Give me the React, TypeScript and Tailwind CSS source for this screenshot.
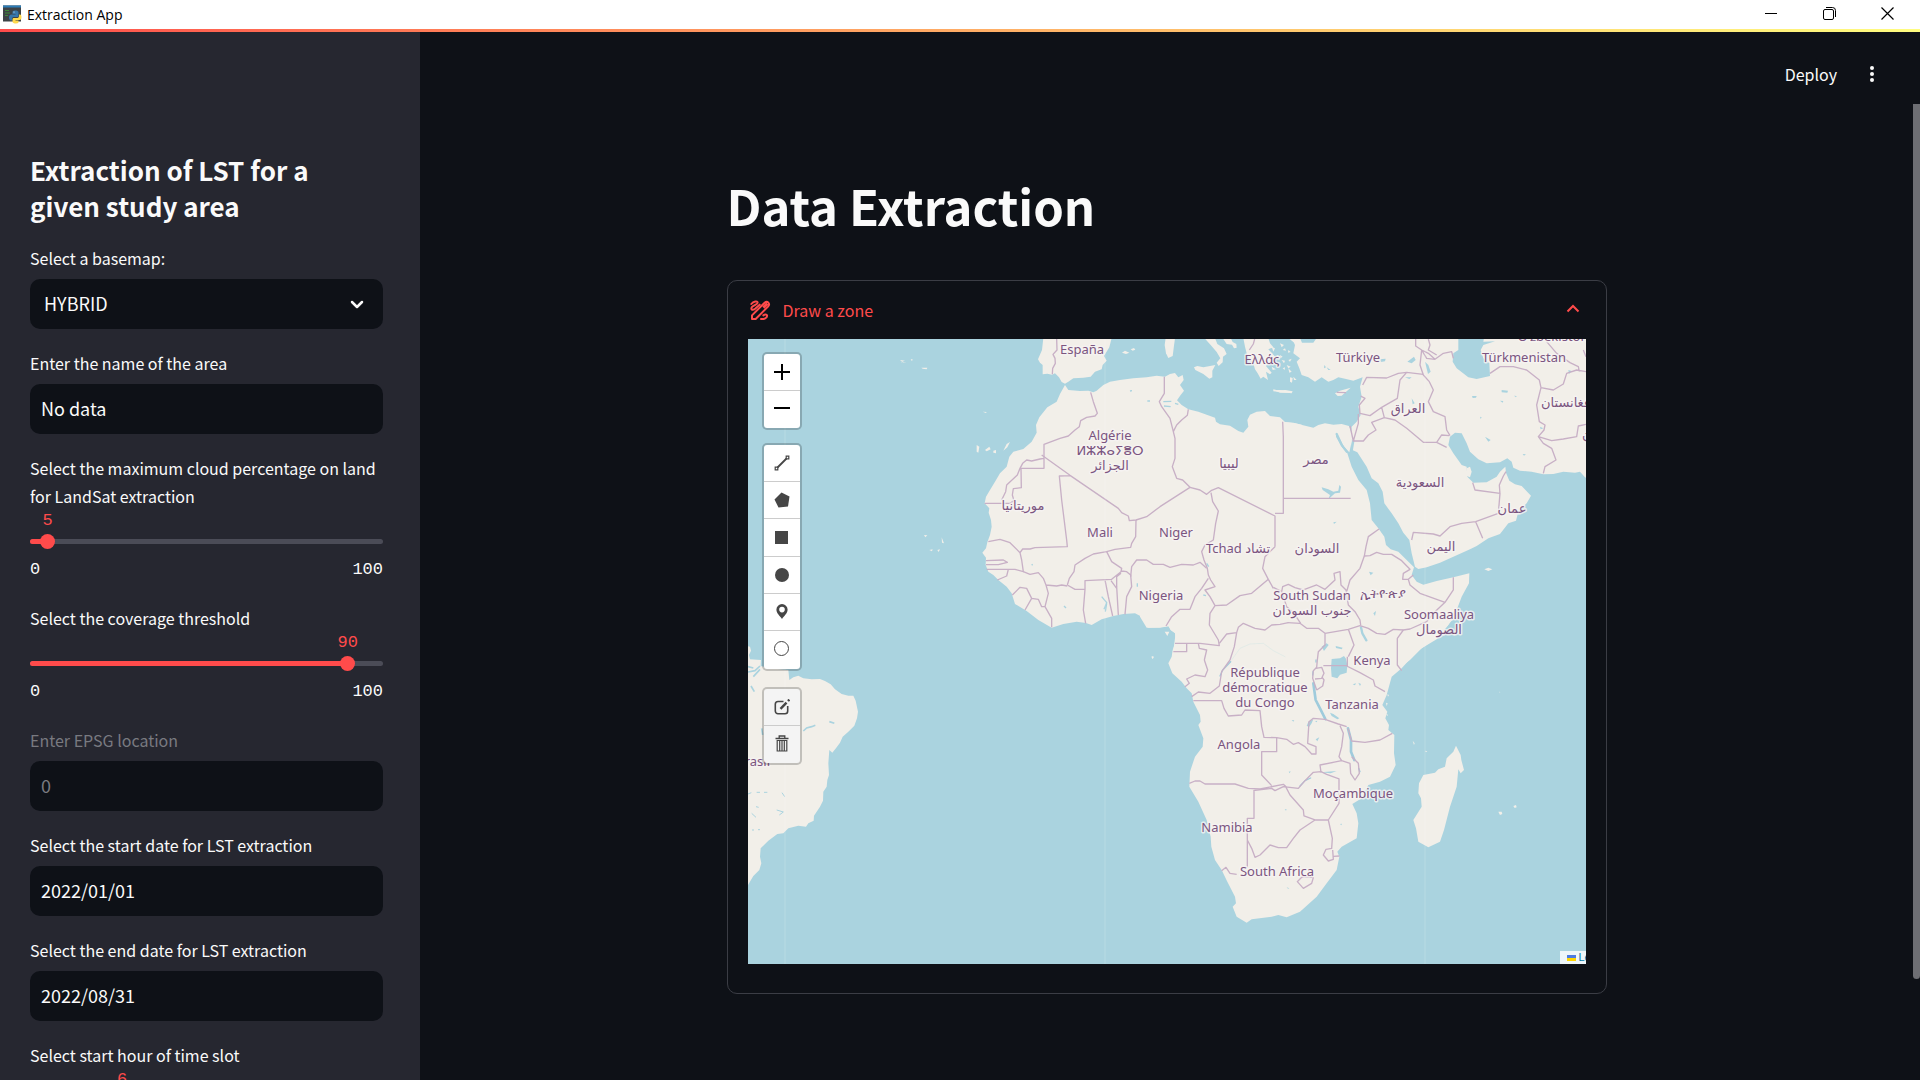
import React, { useState } from "react";

type MapLabel = { x: number; y: number; text: string; anchor?: "start" | "middle" | "end" };

const MAP_LABELS: MapLabel[] = [
  { x: 334, y: 15, text: "España" },
  { x: 514, y: 25, text: "Ελλάς" },
  { x: 610, y: 23, text: "Türkiye" },
  { x: 776, y: 23, text: "Türkmenistan" },
  { x: 805, y: 2, text: "Oʻzbekiston" },
  { x: 362, y: 101, text: "Algérie" },
  { x: 362, y: 116, text: "ⵍⵣⵣⴰⵢⴻⵔ" },
  { x: 362, y: 131, text: "الجزائر" },
  { x: 481, y: 129, text: "ليبيا" },
  { x: 275, y: 171, text: "موريتانيا" },
  { x: 352, y: 198, text: "Mali" },
  { x: 428, y: 198, text: "Niger" },
  { x: 490, y: 214, text: "Tchad تشاد" },
  { x: 413, y: 261, text: "Nigeria" },
  { x: 660, y: 74, text: "العراق" },
  { x: 568, y: 125, text: "مصر" },
  { x: 672, y: 148, text: "السعودية" },
  { x: 764, y: 174, text: "عمان" },
  { x: 693, y: 212, text: "اليمن" },
  { x: 569, y: 214, text: "السودان" },
  { x: 564, y: 261, text: "South Sudan" },
  { x: 564, y: 276, text: "جنوب السودان" },
  { x: 635, y: 259, text: "ኢትዮጵያ" },
  { x: 691, y: 280, text: "Soomaaliya" },
  { x: 691, y: 295, text: "الصومال" },
  { x: 793, y: 68, text: "أفغانستان", anchor: "start" },
  { x: 834, y: 100, text: "پاکستان", anchor: "start" },
  { x: 624, y: 326, text: "Kenya" },
  { x: 517, y: 338, text: "République" },
  { x: 517, y: 353, text: "démocratique" },
  { x: 517, y: 368, text: "du Congo" },
  { x: 604, y: 370, text: "Tanzania" },
  { x: 491, y: 410, text: "Angola" },
  { x: 605, y: 459, text: "Moçambique" },
  { x: 479, y: 493, text: "Namibia" },
  { x: 529, y: 537, text: "South Africa" },
  { x: 22, y: 427, text: "Brasil", anchor: "end" },
];

const LAND = "#f2efe9";
const WATER = "#aad3df";
const BORDER = "#c8b0c6";

const NORTH_WEST = "translate(212 -9) scale(.33333)";
const NORTH_EAST = "translate(522 -49) scale(.33333)";
const SOUTH = "translate(392 241) scale(.33333)";
const AMERICA = "translate(-8 -9) scale(.33333)";

function Land() {
  return (
    <g fill={LAND}>
      <g transform={AMERICA}>
        <path d="M20 948L30 950 33 962 27 975 30 988 63 990 62 1008 90 1015 145 1020 148 1050 160 1042 175 1037 190 1045 215 1048 240 1047 255 1053 272 1063 285 1078 305 1092 325 1097 340 1097 347 1112 354 1145 351 1165 343 1187 325 1205 308 1220 300 1238 290 1252 277 1268 268 1260 265 1300 267 1335 262 1350 260 1370 250 1385 249 1412 240 1430 222 1457 221 1472 205 1480 198 1490 175 1487 145 1495 130 1510 112 1512 85 1532 62 1555 60 1580 64 1600 58 1620 40 1638 24 1665 20 1670Z" />
      </g>
      <g transform={NORTH_WEST}>
        <path d="M250 24L246 60 234 88 240 98 248 105 248 133 262 131 276 134 285 130 297 142 305 156 315 161 325 155 340 145 370 143 392 140 405 125 425 118 428 105 440 92 432 78 448 52 455 24Z" />
        <path d="M486 68L495 62 508 68 498 72ZM512 58L522 54 526 59 518 62Z" />
        <path d="M617 24L645 24 641 55 638 78 625 84 618 70 614 45Z" />
        <path d="M733 24L765 24 772 42 792 55 800 72 789 80 788 97 776 108 770 98 781 85 770 66 752 45ZM788 24L812 24 818 36 829 42 830 53 822 55 816 44 800 42Z" />
        <path d="M702 112L712 108 730 112 766 105 757 122 757 142 748 146 730 132 706 120Z" />
        <path d="M850 24L1020 24 1020 40 1000 36 985 24 925 24 930 40 940 52 925 58 950 85 938 90 950 105 930 96 918 108 935 128 930 133 918 125 924 150 910 140 902 146 893 130 885 118 880 100 862 78 855 50Z" />
        <path d="M940 178L958 182 975 180 998 184 995 190 965 187 940 184ZM985 60L992 66 984 68ZM968 60L975 55 978 62ZM985 90L995 86 990 95ZM968 115L975 112 974 120ZM985 115L995 125 988 128ZM1000 140L1010 150 1002 150ZM960 75L968 80 962 84Z" />
        <path d="M315 165L300 192 290 215 262 232 238 262 228 285 230 308 215 335 190 357 160 365 148 380 140 410 120 430 105 455 90 480 78 500 74 520 88 535 86 548 93 570 95 590 90 615 82 637 78 655 67 668 78 683 77 705 85 725 100 735 115 750 140 770 155 790 165 822 200 843 235 870 275 893 310 882 350 875 378 879 395 885 425 868 460 858 490 852 525 850 548 862 555 880 565 893 600 892 628 888 632 900 647 910 643 940 640 960 635 995 1025 995 1025 284 1000 278 975 276 960 262 930 258 915 243 890 245 870 254 862 270 865 290 850 308 835 303 810 287 780 283 768 275 765 263 740 254 715 245 685 238 665 225 651 211 662 195 672 182 660 165 671 150 668 135 655 142 645 129 630 132 615 140 590 137 560 142 520 145 480 150 450 155 430 165 410 182 400 187 385 182 360 183 325 180Z" />
        <path d="M50 345L58 350 55 368 50 365ZM75 360L88 350 92 358 80 364ZM100 362L108 360 108 370 100 368ZM130 362L140 342 150 336 142 352ZM68 245L80 246 78 249ZM614 905L628 905 622 918ZM575 978L582 980 578 988ZM-108 615L-98 616-104 622ZM-92 660L-82 658-84 664ZM-68 660L-60 658-64 666ZM-55 622L-48 640-54 638ZM-180 90L-165 92-178 97-160 97-170 98ZM-148 88L-142 88-144 94ZM-116 113L-98 113-100 118-112 116Z" />
      </g>
      <g transform={NORTH_EAST}>
        <path d="M65 144L90 144 96 158 130 158 140 144 953 144 953 565 945 562 930 545 915 548 880 545 850 552 820 553 785 545 750 542 730 533 725 515 712 505 690 517 650 520 625 508 600 485 590 460 575 430 555 428 540 440 535 465 550 490 575 525 590 530 592 560 610 578 650 577 680 560 690 545 706 530 708 548 718 572 735 583 755 588 783 617 770 640 745 665 738 692 715 700 690 732 655 745 620 768 600 778 555 798 510 818 470 832 445 837 435 830 425 790 418 750 400 728 385 700 365 670 343 640 338 605 325 580 305 565 290 530 262 487 247 480 243 445 245 410 260 395 272 375 265 350 275 320 270 290 278 262 250 272 225 266 205 262 190 270 175 275 155 262 135 275 115 262 95 255 88 235 80 215 90 205 70 190 75 165Z" />
        <path d="M195 310L210 302 242 293 225 308 215 317 203 318ZM-6 398L40 396 75 400 130 413 145 405 165 400 190 404 215 402 237 408 245 430 245 455 238 487 222 470 210 448 200 428 198 440 215 470 232 490 245 530 265 570 290 600 300 640 305 690 325 715 343 740 348 765 362 778 385 785 410 810 432 832 425 855 440 875 460 884 500 873 550 862 598 850 597 880 575 920 560 960 535 1005 500 1048 455 1075 420 1110 400 1125 -6 1125Z" />
        <path d="M643 838L655 833 667 838 655 843ZM10 300L30 300 55 303 60 308 30 308ZM5 170L15 175 10 185ZM20 195L32 200 24 208ZM30 160L42 165 35 172ZM50 225L62 230 55 235ZM5 230L18 238 8 240ZM35 210L45 212 42 220ZM60 262L68 264 66 278 60 275Z" />
      </g>
      <g transform={SOUTH}>
        <path d="M0 0L0 110 20 143 60 143 85 139 92 150 105 160 107 185 98 210 95 230 85 250 97 280 125 305 140 325 155 340 160 365 180 405 182 425 175 435 190 475 188 500 165 530 150 575 148 620 175 665 200 720 212 770 214 800 225 840 245 870 262 905 285 950 288 970 278 980 290 1010 320 1028 335 1018 395 1010 415 1005 440 1012 480 995 530 950 560 910 590 870 598 830 592 815 605 800 650 775 655 730 650 700 637 672 665 655 685 615 720 605 750 590 767 555 762 520 763 465 745 450 747 435 736 415 742 395 727 375 740 345 755 290 785 265 830 215 895 170 945 110 940 60 800 0Z" />
        <path d="M948 497L962 525 964 540 972 570 962 580 955 568 950 620 930 680 912 750 900 785 865 802 835 785 828 745 820 720 845 680 843 655 835 640 837 610 850 585 885 578 895 568 915 560 920 535 930 525 940 515ZM1075 695L1085 695 1087 702 1080 705ZM1120 678L1128 675 1130 682 1124 684ZM818 482L824 490 822 495ZM855 512L862 514 858 517ZM742 343L747 345 744 350ZM738 368L743 370 740 378ZM738 402L744 404 742 408ZM34 230L40 232 37 236ZM1078 335L1081 336 1079 338Z" />
      </g>
    </g>
  );
}

function InlandWater() {
  return (
    <g fill={WATER}>
      <g transform={AMERICA} fill="none" stroke={WATER} strokeWidth="5">
        <path d="M24 1026L45 1022 60 1008M24 1010L40 1014M40 1040L60 1018M33 1068L43 1085M190 1203L200 1194 215 1190 226 1186M268 1175L283 1180M65 1195L68 1215" />
        <path
          strokeWidth="3"
          d="M24 1392L34 1388M50 1387L60 1387M72 1387L82 1387M126 1388L134 1400M35 1450L48 1462M110 1440L130 1446 118 1455M36 1500L42 1500M54 1499L60 1499M48 1430L56 1432"
        />
      </g>
      <g transform={NORTH_WEST} fill="none" stroke={WATER} strokeWidth="4">
        <path d="M562 213L570 213M610 215L634 214M612 228L632 230M645 220L655 223M510 183L516 182M425 800L440 818 432 838M440 820L436 845M312 828L318 834M532 760L532 770M215 703L218 706M740 700L746 710M730 795L738 797" />
      </g>
      <g transform={NORTH_EAST}>
        <path d="M565 144L642 144 640 155 675 154 640 165 632 180 640 205 658 220 660 258 620 267 595 262 560 235 548 215 550 190 565 180Z" />
        <path d="M412 215L432 200 437 210 425 220ZM465 215L475 225 482 245 474 252ZM328 208L347 206 345 214 332 216ZM695 300L714 302 712 308 695 307ZM425 325L434 340 428 343ZM297 845L310 848 302 856ZM405 262L425 262 418 267ZM606 318L620 318 618 323 608 324ZM690 332L700 333 698 338ZM645 440L662 450 655 455ZM758 492L768 493 762 497ZM895 240L905 243 897 252ZM810 410L820 415 812 418ZM630 380L635 382 632 387ZM155 592L175 598 190 605 205 602 208 585 213 590 210 608 195 610 175 628 180 615 158 600ZM190 697L200 695 192 702ZM310 970L318 963 315 978ZM163 225L168 232 162 235ZM170 232L182 240 175 240ZM732 317L740 318 738 322Z" />
        <path d="M590 535L600 530 605 545 600 562 590 558Z" fill={LAND} />
        <path
          d="M273 1012L277 1030 289 1051M245 482L250 452M200 432L215 465 230 485"
          fill="none"
          stroke={WATER}
          strokeWidth="7"
          strokeLinecap="round"
        />
      </g>
      <g transform={SOUTH}>
        <path d="M575 237L600 235 612 228 618 236 622 256 620 278 600 284 592 295 575 290 573 265Z" />
        <path d="M545 200L560 190 566 195 552 213ZM587 198L608 203 605 208 588 204ZM570 398L580 402 598 415 592 418 575 408ZM505 425L520 418 515 430 508 440 500 438ZM527 478L538 472 532 484ZM638 313L648 310 645 316ZM655 308L663 312 660 318ZM542 577L590 573 572 580ZM446 575L452 574 449 580ZM455 420L463 421 460 425ZM600 732L606 731 604 736ZM525 424L532 422 530 427ZM440 922L448 925 444 926ZM434 688L440 688 438 692Z" />
        <g fill="none" stroke="#9fcbdc" strokeWidth="8" strokeLinecap="round" strokeLinejoin="round">
          <path d="M520 310L527 360 540 385 556 417M624 445L633 480 633 515 643 540" />
          <path
            strokeWidth="4"
            d="M480 618L495 602 512 594M528 240L528 246M519 275L518 285M240 288L248 270 272 245M656 565L660 575"
          />
          <path strokeWidth="2" stroke="#dbe8e6" d="M275 240L300 205 330 192 370 190 400 212 435 230" />
        </g>
      </g>
    </g>
  );
}

function Borders() {
  return (
    <g fill="none" stroke={BORDER} strokeWidth="4" strokeLinejoin="round">
      <g transform={NORTH_WEST}>
        <path d="M290 27L291 60 279 73 285 85 286 100 278 115 277 133M884 27L880 42 868 60" />
        <path d="M392 187L400 215 412 250 405 258 380 262 362 272 358 290 345 300 325 318 300 325 252 343 252 415 180 415M252 385L240 387 215 393 200 390 188 400 180 415 172 435 140 465 137 485 125 510M183 415L184 473 160 476 157 495 162 512 150 520 74 520" />
        <path d="M245 375L330 436 475 535 485 548 505 558 508 572 528 570 560 560 600 530 690 472M330 437L298 438 305 510 320 630 322 650 225 653 210 657 188 657 180 668" />
        <path d="M613 140L613 190 598 215 605 230 630 265 640 305 645 325 645 385 637 410 650 445 668 450 690 472M685 238L682 256 665 270 650 285 640 305" />
        <path d="M690 472L720 480 740 493 753 482 775 473 945 558 945 650M945 550L970 550 970 320 968 275M970 505L1172 505" />
        <path d="M753 488L758 515 775 543 767 580 760 630 735 645 725 665 732 690 742 715 745 735 752 750 765 770 735 780 750 800 765 827" />
        <path d="M528 570L527 620 515 640 512 652 465 658 440 665M512 740L515 710 530 690 560 690 580 703 610 703 630 712 665 703 700 705 720 697 740 715" />
        <path d="M440 665L400 672 375 685 345 705 342 725 328 745 322 765M440 665L455 695 485 715 483 725 455 748 375 752 375 778 370 840 377 880M322 765L345 778 375 778M485 723L500 725 512 735 515 770 500 800 495 853M483 730L470 740 470 770 475 855M435 750L445 800 458 858M453 752L470 775" />
        <path d="M85 635L120 628 150 638 180 668 185 690 190 725 165 718 80 718M78 692L130 690 142 697 115 704 78 704M145 718L140 738 112 750" />
        <path d="M190 725L210 733 235 728 250 745 258 765 290 768 305 765 322 768M258 765L265 790 255 830 275 865 275 892M157 795L180 772 200 775 215 805 195 840M215 805L235 808 245 830 255 830" />
        <path d="M618 888L635 860 660 838 690 838 705 800 725 775 745 745M765 827L750 850 748 885 775 930 778 947 720 940 645 940M765 827L800 825 840 797 875 790 925 748" />
        <path d="M945 650L915 680 908 715 925 748 940 775M778 940L800 912 830 908 835 892 850 880 885 895 915 900 935 885 960 883 985 878M830 908L823 950 810 990M680 940L680 965 640 965M715 940L718 955 740 960 733 990" />
      </g>
      <g transform={NORTH_EAST}>
        <path d="M327 717L295 740 288 770 283 798 300 797 320 787 340 793 365 793 395 812 420 838 400 850 398 868 415 868 430 855M415 868L420 885 450 910 525 937 550 900 550 862M525 937L495 965 470 995 420 1017 400 1020 382 1045 382 1110" />
        <path d="M283 798L270 835 240 870 230 905M10 892L35 905 38 890 55 883 75 893 100 900 140 885 165 898 195 870 192 850 210 845 213 885 228 900 235 945 255 965 270 990 272 1005M35 905L50 950 72 970 92 1000" />
        <path d="M53 998L90 1000 110 1015 145 1015 165 1030 235 1018 270 1007 295 1015 320 1030 345 1033 370 1018 400 1020M165 1030L165 1065 145 1085 142 1110M235 1018L252 1065 235 1100" />
        <path d="M278 285L290 262 350 264 385 250 410 247 460 253M410 247L390 270 382 325 335 352 300 377 270 370 268 345 285 325 272 318M335 352L343 383 305 397 318 420 295 435 280 453 250 453 240 408M250 453L265 400 265 372M343 383L375 390 410 415 460 457 500 457 530 472M500 457L515 435 538 437" />
        <path d="M455 180L450 225 460 255 478 275 490 300 475 335 490 365 525 380 530 420 540 437M437 147L437 168 455 180 475 190 495 208 520 190 545 185 550 205M475 147L480 165 475 180 500 195M455 180L470 205 495 208" />
        <path d="M660 250L690 230 730 230 770 240 808 270 813 293 850 300 880 282 890 250 920 240 948 245M813 293L800 345 808 395 825 405 822 420 805 440 820 460 845 475 858 510 825 530 820 550M805 440L845 452 880 447 920 440 925 408 948 403M830 155L860 190 900 218 925 230 928 245M940 180L948 200" />
        <path d="M425 750L430 727 490 732 510 738 540 710 575 700 617 695 685 670 690 610 615 600 608 578M690 612L688 585 700 558 708 545M617 695L638 745" />
        <path d="M200 307L228 308" />
      </g>
      <g transform={SOUTH}>
        <path d="M270 240L245 275 238 318 210 340 175 336 155 350M193 240L203 270 195 290 165 285 140 297 148 310 135 320" />
        <path d="M532 240L530 262 520 272 518 295 530 330M528 265L545 262 552 280 545 295 525 297M545 290L552 300 548 318 530 330M550 257L622 257 622 230M620 258L660 278 700 300 705 318 735 335M772 240L772 255 785 272" />
        <path d="M160 362L245 362 252 385 265 408 305 405 315 390 360 392 365 440 372 472 410 473 410 515 365 515 365 585 395 617M410 473L440 478 460 493 475 488 495 500 515 522 528 522 528 500 503 490 507 425 520 415 555 418 595 432 620 440M600 437L610 460 605 500 597 530 605 542 540 555 543 577M605 542L630 550 632 580 645 600 658 580 655 550 635 530M624 445L635 483 675 487 720 480 757 460" />
        <path d="M148 610L165 603 180 603 195 612 285 612 325 625 360 627 430 613 440 622M340 632L395 625 405 632 430 620 475 625 495 602 520 577 543 575 560 583 597 597 597 670 565 720 525 720 492 708 490 690 450 645 437 620M342 632L342 715 322 715 322 862M322 780L335 805 345 832 360 825 390 795 415 803 440 803 460 775 480 750 525 720M565 720L577 775 575 805 558 808 550 825 565 843 580 838 578 810M580 829L598 828" />
        <path d="M245 872L258 862 270 880 290 883M472 905L485 892 495 890 520 893 515 910 490 925Z" />
      </g>
    </g>
  );
}

function WorldMap() {
  return (
    <svg
      className="block h-full w-full bg-[#aad3df]"
      viewBox="0 0 838 625"
      preserveAspectRatio="xMinYMin slice"
      role="img"
      aria-label="Map of Africa and its surroundings"
    >
      <Land />
      <InlandWater />
      <Borders />
      <path d="M37 0V625M357 0V625M677 0V625" stroke="#fff" strokeOpacity=".18" fill="none" />
      <g
        fontFamily="'Noto Sans', 'DejaVu Sans', sans-serif"
        fontSize="13"
        fill="#7b5580"
        stroke="#f7f4f3"
        strokeOpacity=".8"
        strokeWidth="3"
        strokeLinejoin="round"
        paintOrder="stroke"
      >
        {MAP_LABELS.map((l) => (
          <text key={l.text} x={l.x} y={l.y} textAnchor={l.anchor ?? "middle"}>
            {l.text}
          </text>
        ))}
      </g>
    </svg>
  );
}

function ToolButton({ label, children }: { label: string; children: React.ReactNode }) {
  return (
    <button
      type="button"
      aria-label={label}
      className="flex min-h-0 flex-1 items-center justify-center border-b border-[#ccc] text-[#464646] last:border-b-0 last:pb-[2px]"
    >
      {children}
    </button>
  );
}

const TOOLBAR =
  "flex w-[40px] flex-col overflow-hidden rounded-[5px] border-2 border-black/20 bg-clip-padding";

function MapControls() {
  return (
    <div className="absolute top-[13px] left-[14px] flex flex-col">
      <div className={`${TOOLBAR} h-[78px] bg-white`}>
        <ToolButton label="Zoom in">
          <svg width="16" height="16" viewBox="0 0 16 16" stroke="#000" strokeWidth="2">
            <path d="M0 8H16M8 0V16" />
          </svg>
        </ToolButton>
        <ToolButton label="Zoom out">
          <svg width="16" height="16" viewBox="0 0 16 16" stroke="#000" strokeWidth="2">
            <path d="M0 8H16" />
          </svg>
        </ToolButton>
      </div>
      <div className={`${TOOLBAR} mt-[13px] h-[228px] bg-white`}>
        <ToolButton label="Draw a polyline">
          <svg width="16" height="16" viewBox="0 0 16 16" fill="none" stroke="currentColor">
            <path d="M3.500 12.500L12.500 3.500" strokeWidth="1.800" />
            <path d="M1.200 12.200h2.600v2.600H1.200zM12.200 1.200h2.600v2.600H12.200z" strokeWidth="1.200" />
          </svg>
        </ToolButton>
        <ToolButton label="Draw a polygon">
          <svg width="16" height="16" viewBox="0 0 16 16" fill="currentColor">
            <path d="M7.500 .5L15.500 4.500 14 14.500 4.500 15.500 .5 7.500Z" />
          </svg>
        </ToolButton>
        <ToolButton label="Draw a rectangle">
          <span className="size-[13px] bg-[#464646]" />
        </ToolButton>
        <ToolButton label="Draw a circle">
          <span className="size-[14px] rounded-full bg-[#464646]" />
        </ToolButton>
        <ToolButton label="Draw a marker">
          <svg width="12" height="15" viewBox="0 0 12 15" fill="currentColor" fillRule="evenodd">
            <path d="M6 0a5.600 5.600 0 0 1 5.600 5.600C11.600 9.500 8 12 6 15 4 12 .4 9.500.4 5.600A5.600 5.600 0 0 1 6 0Zm0 2.800a2.800 2.800 0 1 0 0 5.600 2.800 2.800 0 0 0 0-5.600Z" />
          </svg>
        </ToolButton>
        <ToolButton label="Draw a circle marker">
          <span className="size-[15px] rounded-full border border-[#464646]" />
        </ToolButton>
      </div>
      <div className={`${TOOLBAR} mt-4 h-[78px] bg-[#f4f4f4]`}>
        <ToolButton label="Edit layers">
          <svg width="16" height="16" viewBox="0 0 16 16" fill="none" stroke="currentColor" strokeWidth="1.600">
            <path d="M9.500 2.500H4A2.700 2.700 0 0 0 1.300 5.200V12A2.700 2.700 0 0 0 4 14.700H11A2.700 2.700 0 0 0 13.700 12V7" />
            <path d="M6.500 9.800L12.500 3.600" strokeWidth="2.400" />
            <path d="M14 2L15.400 .6" strokeWidth="2.400" />
          </svg>
        </ToolButton>
        <ToolButton label="Delete layers">
          <svg width="14" height="17" viewBox="0 0 14 17" fill="none" stroke="currentColor">
            <path d="M.5 3.500H13.500M4.200 3V1H9.800V3" strokeWidth="1.300" />
            <path d="M2.200 5.500V16H11.800V5.500ZM4.700 5.500V16M7 5.500V16M9.300 5.500V16" strokeWidth="1.200" />
          </svg>
        </ToolButton>
      </div>
    </div>
  );
}

const LABEL = "block text-[16px] leading-7";
const FIELD =
  "mt-[7px] block h-[50px] w-full rounded-[10px] bg-[#0e1117] pb-[2px] text-[18px] text-[#fafafa] outline-none";

function TextField({
  id,
  label,
  value,
  disabled,
}: {
  id: string;
  label: string;
  value: string;
  disabled?: boolean;
}) {
  return (
    <div>
      <label htmlFor={id} className={`${LABEL} ${disabled ? "text-[#797a80]" : ""}`}>
        {label}
      </label>
      <input
        id={id}
        type="text"
        defaultValue={value}
        disabled={disabled}
        className={`${FIELD} px-[11px] disabled:text-[#797a80]`}
      />
    </div>
  );
}

function Slider({
  id,
  label,
  initial,
  min = 0,
  max = 100,
}: {
  id: string;
  label: string;
  initial: number;
  min?: number;
  max?: number;
}) {
  const [value, setValue] = useState(initial);
  const pct = ((value - min) / (max - min)) * 100;
  return (
    <div>
      <label htmlFor={id} className={LABEL}>
        {label}
      </label>
      <div className="flex h-[74px] flex-col font-['Liberation_Mono',monospace] text-[17px]">
        <div className="relative h-[29px]">
          <output
            htmlFor={id}
            className="absolute top-0 -translate-x-1/2 leading-[22px] text-[#ff4b4b]"
            style={{ left: `${pct}%` }}
          >
            {value}
          </output>
        </div>
        <div className="relative h-[5px] rounded-full bg-[#4b4c57]">
          <div className="h-full rounded-full bg-[#ff4b4b]" style={{ width: `${pct}%` }} />
          <input
            id={id}
            type="range"
            min={min}
            max={max}
            value={value}
            onChange={(e) => setValue(Number(e.target.value))}
            className="absolute -top-[5px] -left-2 h-[15px] w-[calc(100%+15px)] cursor-pointer appearance-none bg-transparent outline-none [&::-webkit-slider-thumb]:size-[15px] [&::-webkit-slider-thumb]:appearance-none [&::-webkit-slider-thumb]:rounded-full [&::-webkit-slider-thumb]:bg-[#ff4b4b]"
          />
        </div>
        <div className="mt-[15px] flex justify-between leading-[22px]">
          <span>{min}</span>
          <span>{max}</span>
        </div>
      </div>
    </div>
  );
}

function Sidebar() {
  return (
    <aside className="flex w-[420px] shrink-0 flex-col gap-5 overflow-hidden bg-[#262730] pt-[120px] pr-[37px] pl-[30px]">
      <h2 className="text-[26px] leading-9 font-bold">Extraction of LST for a given study area</h2>
      <div>
        <label htmlFor="basemap" className={LABEL}>
          Select a basemap:
        </label>
        <div className="relative">
          <select id="basemap" className={`${FIELD} appearance-none pl-[14px]`}>
            <option>HYBRID</option>
          </select>
          <svg
            className="pointer-events-none absolute top-[21px] right-[19px]"
            width="14"
            height="9"
            viewBox="0 0 14 9"
            fill="none"
            stroke="#fafafa"
            strokeWidth="2.500"
            strokeLinecap="round"
            strokeLinejoin="round"
          >
            <path d="M2 2L7 7 12 2" />
          </svg>
        </div>
      </div>
      <TextField id="area" label="Enter the name of the area" value="No data" />
      <Slider id="cloud" label="Select the maximum cloud percentage on land for LandSat extraction" initial={5} />
      <Slider id="coverage" label="Select the coverage threshold" initial={90} />
      <TextField id="epsg" label="Enter EPSG location" value="0" disabled />
      <TextField id="start" label="Select the start date for LST extraction" value="2022/01/01" />
      <TextField id="end" label="Select the end date for LST extraction" value="2022/08/31" />
      <Slider id="hour" label="Select start hour of time slot" initial={6} max={23} />
    </aside>
  );
}

function TitleBar() {
  return (
    <header className="flex h-[29px] shrink-0 items-center bg-white pr-1 pl-[3px] text-black">
      <svg width="19" height="19" viewBox="0 0 38 38" aria-hidden="true">
        <rect width="36" height="32" y="1" fill="#3d4347" />
        <rect width="36" height="4" y="1" fill="#2c7db8" />
        <path d="M4 11h8M4 16h10M4 21h6" stroke="#3f8a3a" strokeWidth="2" />
        <path
          fill="#3776ab"
          d="M24 11c-5 0-5 2-5 4v3h6v1h-8c-3 0-5 2-5 6s2 6 4 6h2v-3c0-3 2-4 4-4h6c2 0 3-1 3-3v-6c0-3-3-4-7-4Z"
        />
        <path
          fill="#ffd94d"
          d="M26 37c5 0 5-2 5-4v-2h-6v-1h8c3 0 4-2 4-6s-2-5-4-5h-1v3c0 3-2 4-4 4h-6c-2 0-3 1-3 3v4c0 3 3 4 7 4Z"
        />
        <circle cx="22" cy="14" r="1" fill="#fff" />
      </svg>
      <span className="ml-[5px] flex-1 font-['Open_Sans',sans-serif] text-[14px] leading-5">Extraction App</span>
      <div className="flex h-[27px] self-start">
        <button type="button" aria-label="Minimize" className="flex w-[58px] items-center justify-center">
          <span className="h-px w-3 bg-black" />
        </button>
        <button type="button" aria-label="Restore" className="flex w-[58px] items-center justify-center">
          <svg width="13" height="13" viewBox="0 0 13 13" fill="none" stroke="#000">
            <rect x=".5" y="2.500" width="10" height="10" rx="1.500" />
            <path d="M3 .5H9.500A3 3 0 0 1 12.500 3.500V10" />
          </svg>
        </button>
        <button type="button" aria-label="Close" className="flex w-[58px] items-center justify-center">
          <svg width="13" height="13" viewBox="0 0 13 13" stroke="#000" strokeWidth="1.200">
            <path d="M.5 .5L12.500 12.500M12.500 .5L.5 12.500" />
          </svg>
        </button>
      </div>
    </header>
  );
}

function DrawIcon() {
  return (
    <svg width="21" height="21" viewBox="0 0 63 63" fill="none" stroke="currentColor" aria-hidden="true">
      <g strokeWidth="6" strokeLinecap="round" strokeLinejoin="round">
        <path d="M4 12C10 4 23 2 23 8 23 14 4 17 4 25 4 32 12 30 17 25L29 14" />
        <path d="M6 57V46L43 9Q50 3 55 8 60 13 54 20L17 57Z" />
        <path d="M33 57C41 58 53 54 51 46 50 42 44 43 40 46" />
      </g>
      <path d="M40 23L52 11" strokeWidth="9" />
    </svg>
  );
}

export default function App() {
  return (
    <div className="flex h-screen flex-col overflow-hidden bg-[#0e1117] font-['Noto_Sans_CJK_SC','Noto_Sans',sans-serif] text-[#fafafa]">
      <TitleBar />
      <div className="h-[3px] shrink-0 bg-linear-to-r from-[#ff4b4b] to-[#fffd80]" />
      <div className="flex min-h-0 flex-1">
        <Sidebar />
        <main className="flex min-w-0 flex-1 flex-col">
          <div className="flex h-[72px] shrink-0 items-center justify-end pt-[11px] pr-[44px]">
            <button type="button" className="text-[16px] leading-6">
              Deploy
            </button>
            <button type="button" aria-label="Main menu" className="ml-[31px] flex w-2 flex-col items-center gap-[2px]">
              <span className="size-1 rounded-full bg-[#fafafa]" />
              <span className="size-1 rounded-full bg-[#fafafa]" />
              <span className="size-1 rounded-full bg-[#fafafa]" />
            </button>
          </div>
          <div className="flex min-h-0 flex-1">
            <div className="min-w-0 flex-1 px-5 pt-[68px]">
              <div className="mx-auto w-full max-w-[880px]">
                <h1 className="text-[49px] leading-[66px] font-bold">Data Extraction</h1>
                <details open className="mt-[42px] rounded-[10px] border border-[#3b3d45]">
                  <summary className="flex h-[58px] list-none items-center justify-between pr-[26px] pl-[22px] text-[#ff4b4b]">
                    <span className="flex items-center gap-3 text-[16px] leading-6">
                      <DrawIcon />
                      Draw a zone
                    </span>
                    <svg
                      className="mb-1"
                      width="14"
                      height="9"
                      viewBox="0 0 14 9"
                      fill="none"
                      stroke="currentColor"
                      strokeWidth="2"
                      aria-hidden="true"
                    >
                      <path d="M1.500 7.500L7 2 12.500 7.500" />
                    </svg>
                  </summary>
                  <div className="px-5 pb-[29px]">
                    <div className="relative h-[625px] overflow-hidden">
                      <WorldMap />
                      <MapControls />
                      <div className="absolute right-0 bottom-0 flex h-[13px] w-[26px] items-center overflow-hidden bg-white/80 pl-[7px] whitespace-nowrap">
                        <svg width="9" height="6" viewBox="0 0 9 6" className="shrink-0" aria-hidden="true">
                          <rect width="9" height="3" fill="#4C7BE1" />
                          <rect width="9" height="3" y="3" fill="#FFD500" />
                        </svg>
                        <a
                          href="#leaflet"
                          className="ml-[3px] font-['Liberation_Sans',sans-serif] text-[11px] leading-none text-[#0078a8]"
                        >
                          Leaflet
                        </a>
                      </div>
                    </div>
                  </div>
                </details>
              </div>
            </div>
            <div className="h-[875px] w-[7px] shrink-0 rounded-b-[4px] bg-[#6d6e73]" />
          </div>
        </main>
      </div>
    </div>
  );
}
